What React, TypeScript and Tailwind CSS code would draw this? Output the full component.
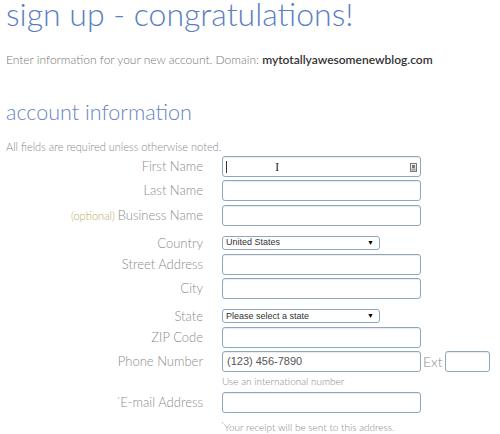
import React from 'react';

const labelCls = 'shrink-0 text-right text-[13px] text-[#8c8c8c] leading-none pr-[19px]';
const boxCls = 'h-[21px] shrink-0 rounded-[3px] border border-[#8fa6bf] bg-white shadow-[inset_0_1px_1px_rgba(0,0,0,0.08)]';
const inputCls = `${boxCls} w-[199px]`;

function Row({ label, children, optional, end }: { label: React.ReactNode; children: React.ReactNode; optional?: boolean; end?: boolean }) {
    return (
        <div className={`flex h-[21px] ${end ? 'items-end' : 'items-center'}`}>
            <div className={`w-[222px] ${labelCls}`}>
                {optional && <span className="text-[11px] text-[#b9ad5f]">(optional) </span>}
                {label}
            </div>
            {children}
        </div>
    );
}

function FakeSelect({ value }: { value: string }) {
    return (
        <div className="flex h-[14px] w-[158px] items-center justify-between rounded-[3px] border border-[#8fa6bf] bg-white pl-[3px] pr-[5px] font-['Liberation_Sans',sans-serif] text-[9px] text-[#333]">
            <span>{value}</span>
            <span className="text-[7px] text-black">▼</span>
        </div>
    );
}

export default function App() {
    return (
        <div className="h-[434px] w-[500px] overflow-hidden bg-white pl-[6px] font-['Lato',sans-serif] font-light">
            <h1 className="-mt-[6px] text-[32px] leading-[40px] text-[#5a7ec4]">sign up - congratulations!</h1>

            <p className="mt-[19px] text-[12px] leading-[14px] text-[#777]">
                Enter information for your new account. Domain:{' '}
                <span className="text-[12px] font-semibold text-[#333]">mytotallyawesomenewblog.com</span>
            </p>

            <h2 className="mt-[32px] text-[21.5px] leading-[26px] text-[#6a84c2]">account information</h2>

            <p className="mt-[16px] text-[11px] leading-[12px] text-[#888]">All fields are required unless otherwise noted.</p>

            <div className="-ml-[6px] mt-[3px] flex flex-col gap-[3.4px]">
                <Row label="First Name">
                    <div className={`${inputCls} relative flex items-center`}>
                        <span className="ml-[3px] h-[12px] w-px bg-[#333]" />
                        <span className="absolute left-[52px] top-[3px] font-['Liberation_Serif',serif] text-[13px] font-normal leading-none text-[#333]">I</span>
                        <svg className="absolute right-[3px] top-[6px]" width="7" height="9" viewBox="0 0 7 9">
                            <rect x="0.5" y="0.5" width="6" height="8" fill="#eee" stroke="#777" />
                            <rect x="2" y="2" width="3" height="3" fill="#777" />
                            <rect x="1.5" y="5.5" width="4" height="2" fill="#999" />
                        </svg>
                    </div>
                </Row>
                <Row label="Last Name">
                    <div className={inputCls} />
                </Row>
                <Row label="Business Name" optional>
                    <div className={inputCls} />
                </Row>
                <Row label="Country" end>
                    <FakeSelect value="United States" />
                </Row>
                <Row label="Street Address">
                    <div className={inputCls} />
                </Row>
                <Row label="City">
                    <div className={inputCls} />
                </Row>
                <Row label="State" end>
                    <FakeSelect value="Please select a state" />
                </Row>
                <Row label="ZIP Code">
                    <div className={inputCls} />
                </Row>
                <Row label="Phone Number">
                    <div className={`${inputCls} flex items-center pl-[4px] font-['Liberation_Sans',sans-serif] text-[11px] font-normal text-[#555]`}>
                        (123) 456-7890
                    </div>
                    <span className="ml-[2px] text-[14px] text-[#8c8c8c]">Ext</span>
                    <div className={`${boxCls} ml-[3px] w-[45px]`} />
                </Row>
            </div>

            <p className="-ml-[6px] mt-[3px] pl-[222px] text-[10px] leading-[13px] text-[#888]">Use an international number</p>

            <div className="-ml-[6px] mt-[4px]">
                <Row label={<><sup className="text-[8px]">*</sup>E-mail Address</>}>
                    <div className={inputCls} />
                </Row>
            </div>

            <p className="-ml-[6px] mt-[8px] pl-[221px] text-[10px] leading-[13px] text-[#888]">
                <sup className="text-[7px]">*</sup>Your receipt will be sent to this address.
            </p>
        </div>
    );
}
